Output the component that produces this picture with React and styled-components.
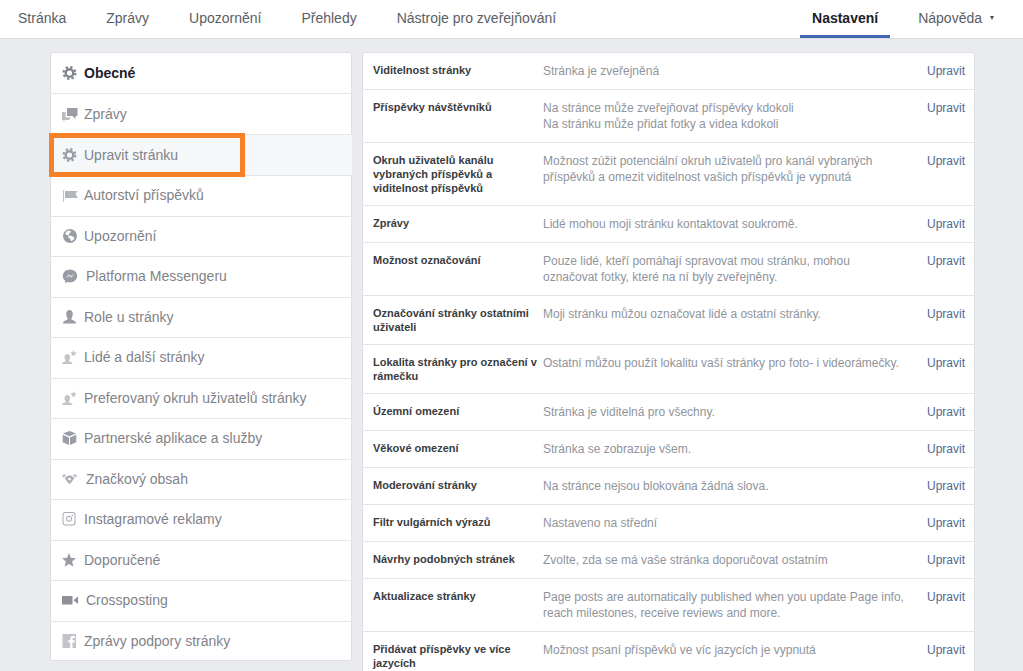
import React from 'react';
import styled, { createGlobalStyle } from 'styled-components';

const GlobalStyle = createGlobalStyle`
  html, body {
    margin: 0;
    height: 671px;
    overflow: hidden;
    background: #e9ebee;
    font-family: "Liberation Sans", Arial, sans-serif;
  }
`;

const TopNav = styled.nav`
  display: flex;
  justify-content: space-between;
  height: 38px;
  padding: 0 29px 0 18px;
  background: #fff;
  border-bottom: 1px solid #dadde1;
`;

const NavGroup = styled.div`
  display: flex;
  gap: ${(props) => props.$gap}px;
`;

const NavItem = styled.a`
  display: flex;
  align-items: center;
  height: 35px;
  padding: 0 ${(props) => (props.$active ? 12 : 0)}px;
  font-size: 14px;
  font-weight: ${(props) => (props.$active ? 'bold' : 'normal')};
  color: ${(props) => (props.$active ? '#1d2129' : '#5a5e65')};
  border-bottom: 3px solid ${(props) => (props.$active ? '#4267b2' : 'transparent')};
`;

const Caret = styled.span`
  width: 0;
  height: 0;
  margin-left: 8px;
  border-left: 2.5px solid transparent;
  border-right: 2.5px solid transparent;
  border-top: 4px solid #4b4f56;
`;

const Content = styled.main`
  display: flex;
  align-items: flex-start;
  gap: 10px;
  padding: 13px 48px 0 50px;
`;

const Sidebar = styled.ul`
  flex: 0 0 302px;
  margin: 0;
  padding: 0;
  list-style: none;
  background: #fff;
  border-radius: 3px;
  box-shadow: 0 0 0 1px #dddfe2 inset;
`;

const SideRow = styled.li`
  position: relative;
  display: flex;
  align-items: center;
  box-sizing: border-box;
  height: 40.5px;
  padding: 0 0 1px 12px;
  font-size: 14px;
  font-weight: ${(props) => (props.$current ? 'bold' : 'normal')};
  color: ${(props) => (props.$current ? '#1d2129' : '#7f8389')};
  background: ${(props) => (props.$selected ? '#f6f7f9' : 'transparent')};
  border-top: 1px solid #e3e5e8;
  &:nth-child(-n + 3) {
    height: 41px;
  }
  &:first-child {
    padding-top: 1px;
    border-top: 0;
  }
`;

const SideIcon = styled.svg`
  flex: 0 0 16px;
  width: 16px;
  height: 16px;
  margin-right: ${(props) => props.$space || 6}px;
  fill: #9a9da5;
`;

const Highlight = styled.span`
  position: absolute;
  z-index: 1;
  left: -1px;
  top: -2px;
  width: 196px;
  height: 44px;
  box-sizing: border-box;
  border: 5px solid #f58228;
`;

const Panel = styled.section`
  flex: 1;
  background: #fff;
  border-radius: 3px 3px 0 0;
  box-shadow: 0 0 0 1px #dddfe2 inset;
`;

const SettingRow = styled.div`
  display: grid;
  grid-template-columns: 170px 1fr auto;
  padding: 10px 10px 10px 11px;
  border-top: 1px solid #e3e5e8;
  &:first-child {
    padding-top: 11px;
    border-top: 0;
  }
`;

const SettingName = styled.div`
  font-size: 11px;
  line-height: 14px;
  font-weight: bold;
  color: #3a3c41;
`;

const SettingValue = styled.div`
  max-width: 362px;
  font-size: 12px;
  line-height: 16px;
  color: #90949c;
`;

const EditLink = styled.a`
  font-size: 12px;
  line-height: 16px;
  color: #4f6a92;
`;

const Gear = ({ dark }) => (
  <SideIcon viewBox="0 0 16 16">
    <g fill="none" stroke={dark ? '#80848c' : '#9a9da5'}>
      <circle cx="7.500" cy="8" r="3.800" strokeWidth="2.400" />
      <circle cx="7.500" cy="8" r="5.900" strokeWidth="2.200" strokeDasharray="2.320 2.320" />
    </g>
  </SideIcon>
);

const Chats = () => (
  <SideIcon viewBox="0 0 16 16">
    <path d="M5 2h10.500v8h-2v3l-3-3H5z" />
    <path d="M0 6h3.500v5.500H9L7 14H3l-1.500 1.500V14H0z" opacity="0.7" />
  </SideIcon>
);

const Flag = () => (
  <SideIcon viewBox="0 0 16 16">
    <path d="M1 3h1v12H1z" opacity="0.6" />
    <path d="M3 4h12.500l-2 3 2 3v1H3z" opacity="0.75" />
  </SideIcon>
);

const Globe = () => (
  <SideIcon viewBox="0 0 16 16">
    <path
      fillRule="evenodd"
      d="M8 1a7 7 0 1 0 0 14A7 7 0 0 0 8 1zM3 6l2-3 3-.5 1 1.500-2 1.500v2L5 7zm6 7-1-2.500-2-1 1-2 3 .5 2.500 2-1 2z"
    />
  </SideIcon>
);

const Messenger = () => (
  <SideIcon viewBox="0 0 16 16" $space={8}>
    <path d="M8 1.500C3.900 1.500.8 4.300.8 7.900c0 2 1 3.700 2.500 4.900v2.500l2.300-1.300c.8.2 1.600.3 2.400.3 4.100 0 7.200-2.800 7.200-6.400S12.100 1.500 8 1.500z" />
    <path d="M3.800 10 7 6.500l1.700 1.700L12.200 6 9 9.500 7.300 7.800z" fill="#fff" />
  </SideIcon>
);

const Person = () => (
  <SideIcon viewBox="0 0 16 16">
    <path d="M7.500 1c2 0 3.300 1.500 3.300 3.700 0 2.300-1.100 4.300-1.500 4.800 0 .8.300 1.300 1 1.600 2 .7 3.700 1.300 3.700 3.400H1c0-2.100 1.700-2.700 3.700-3.400.7-.3 1-.8 1-1.600-.4-.5-1.500-2.500-1.500-4.800C4.200 2.500 5.500 1 7.500 1z" />
  </SideIcon>
);

const PersonStar = () => (
  <SideIcon viewBox="0 0 16 16">
    <path
      opacity="0.6"
      d="M5.500 5c1.600 0 2.600 1.200 2.600 3 0 1.500-.8 3-1.200 3.400 0 .6.300.9.800 1.100 1.500.5 2.800 1 2.800 2.500H0c0-1.500 1.300-2 2.800-2.500.5-.2.800-.5.800-1.100C3.200 11 2.500 9.500 2.500 8c0-1.800 1.400-3 3-3z"
    />
    <path opacity="0.6" d="m11.500 1 .9 2.300 2.400.1-1.900 1.500.7 2.300-2.100-1.300-2 1.300.6-2.300-1.900-1.500 2.400-.1z" />
  </SideIcon>
);

const Cube = () => (
  <SideIcon viewBox="0 0 16 16">
    <path d="M7.500 1 14 3.500 7.500 6.200 1 3.500z" />
    <path d="M.7 4.700 7 7.400V15L.7 12.200z" />
    <path d="M14.300 4.700 8 7.400V15l6.300-2.800z" />
  </SideIcon>
);

const Handshake = () => (
  <SideIcon viewBox="0 0 16 16" $space={8}>
    <path opacity="0.7" d="M0 4.500 2.500 3 4 4.500 1.500 6.500zM15 4.500 12.500 3 11 4.500 13.500 6.500z" />
    <path
      opacity="0.8"
      fillRule="evenodd"
      d="M2.500 7 6 4.500h3L12.500 7 8.500 12.500h-2zM5.500 7.500l2 2 1.800-1-1.800-1.800z"
    />
  </SideIcon>
);

const Instagram = () => (
  <SideIcon viewBox="0 0 16 16">
    <path
      fillRule="evenodd"
      opacity="0.85"
      d="M3.500 1h7a3 3 0 0 1 3 3v7.500a3 3 0 0 1-3 3h-7a3 3 0 0 1-3-3V4a3 3 0 0 1 3-3zm0 1a2 2 0 0 0-2 2v7.500a2 2 0 0 0 2 2h7a2 2 0 0 0 2-2V4a2 2 0 0 0-2-2zM7 4.700a3 3 0 1 1 0 6 3 3 0 0 1 0-6zm0 1a2 2 0 1 0 0 4 2 2 0 0 0 0-4zm3.300-2.200a.7.7 0 1 1 0 1.500.7.7 0 0 1 0-1.500z"
    />
  </SideIcon>
);

const Star = () => (
  <SideIcon viewBox="0 0 16 16">
    <path d="m7 1 1.900 4.800 5.100.4-3.900 3.400 1.300 5.100L7 11.900l-4.400 2.800 1.300-5.100L0 6.200l5.100-.4z" />
  </SideIcon>
);

const Camera = () => (
  <SideIcon viewBox="0 0 16 16" $space={8}>
    <path d="M0 4h10.500v8.500H0zM11.500 8.200 16 4.500v7.500z" fill="#8d9099" />
  </SideIcon>
);

const FacebookSquare = () => (
  <SideIcon viewBox="0 0 16 16">
    <path
      opacity="0.6"
      fillRule="evenodd"
      d="M.5 1h13.500v14h-3.500V9.500h2l.3-2.300h-2.300V6c0-.7.2-1.100 1.100-1.100h1.200v-2c-.3-.1-.9-.1-1.600-.1-1.700 0-3 1-3 2.900v1.500h-2v2.300h2V15H.5z"
    />
  </SideIcon>
);

const sideItems = [
  { label: 'Obecné', icon: Gear, current: true },
  { label: 'Zprávy', icon: Chats },
  { label: 'Upravit stránku', icon: Gear, selected: true },
  { label: 'Autorství příspěvků', icon: Flag },
  { label: 'Upozornění', icon: Globe },
  { label: 'Platforma Messengeru', icon: Messenger },
  { label: 'Role u stránky', icon: Person },
  { label: 'Lidé a další stránky', icon: PersonStar },
  { label: 'Preferovaný okruh uživatelů stránky', icon: PersonStar },
  { label: 'Partnerské aplikace a služby', icon: Cube },
  { label: 'Značkový obsah', icon: Handshake },
  { label: 'Instagramové reklamy', icon: Instagram },
  { label: 'Doporučené', icon: Star },
  { label: 'Crossposting', icon: Camera },
  { label: 'Zprávy podpory stránky', icon: FacebookSquare },
];

const settings = [
  ['Viditelnost stránky', ['Stránka je zveřejněná']],
  ['Příspěvky návštěvníků', ['Na stránce může zveřejňovat příspěvky kdokoli', 'Na stránku může přidat fotky a videa kdokoli']],
  ['Okruh uživatelů kanálu vybraných příspěvků a viditelnost příspěvků', ['Možnost zúžit potenciální okruh uživatelů pro kanál vybraných příspěvků a omezit viditelnost vašich příspěvků je vypnutá']],
  ['Zprávy', ['Lidé mohou moji stránku kontaktovat soukromě.']],
  ['Možnost označování', ['Pouze lidé, kteří pomáhají spravovat mou stránku, mohou označovat fotky, které na ní byly zveřejněny.']],
  ['Označování stránky ostatními uživateli', ['Moji stránku můžou označovat lidé a ostatní stránky.']],
  ['Lokalita stránky pro označení v rámečku', ['Ostatní můžou použít lokalitu vaší stránky pro foto- i videorámečky.']],
  ['Územní omezení', ['Stránka je viditelná pro všechny.']],
  ['Věkové omezení', ['Stránka se zobrazuje všem.']],
  ['Moderování stránky', ['Na stránce nejsou blokována žádná slova.']],
  ['Filtr vulgárních výrazů', ['Nastaveno na střední']],
  ['Návrhy podobných stránek', ['Zvolte, zda se má vaše stránka doporučovat ostatním']],
  ['Aktualizace stránky', ['Page posts are automatically published when you update Page info, reach milestones, receive reviews and more.']],
  ['Přidávat příspěvky ve více jazycích', ['Možnost psaní příspěvků ve víc jazycích je vypnutá']],
];

const App = () => (
  <>
    <GlobalStyle />
    <TopNav>
      <NavGroup $gap={40}>
        <NavItem>Stránka</NavItem>
        <NavItem>Zprávy</NavItem>
        <NavItem>Upozornění</NavItem>
        <NavItem>Přehledy</NavItem>
        <NavItem>Nástroje pro zveřejňování</NavItem>
      </NavGroup>
      <NavGroup $gap={28}>
        <NavItem $active>Nastavení</NavItem>
        <NavItem>
          Nápověda
          <Caret />
        </NavItem>
      </NavGroup>
    </TopNav>
    <Content>
      <Sidebar>
        {sideItems.map(({ label, icon: Icon, current, selected }) => (
          <SideRow key={label} $current={current} $selected={selected}>
            <Icon dark={current} />
            {label}
            {selected && <Highlight />}
          </SideRow>
        ))}
      </Sidebar>
      <Panel>
        {settings.map(([name, lines]) => (
          <SettingRow key={name}>
            <SettingName>{name}</SettingName>
            <SettingValue>
              {lines.map((line) => (
                <div key={line}>{line}</div>
              ))}
            </SettingValue>
            <EditLink>Upravit</EditLink>
          </SettingRow>
        ))}
      </Panel>
    </Content>
  </>
);

export default App;
